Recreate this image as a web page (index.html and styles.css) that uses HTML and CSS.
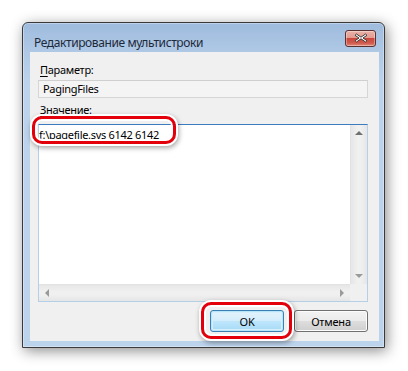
FILE: index.html
```html
<!DOCTYPE html>
<html lang="ru">
<head>
<meta charset="utf-8">
<link rel="stylesheet" href="styles.css">
</head>
<body>
<div class="window">
  <div class="titlebar">
    <span class="title">Редактирование мультистроки</span>
    <button class="close" aria-label="Закрыть">
      <svg width="14" height="10" viewBox="0 0 14 10">
        <path d="M2.5 1 L7 4.2 L11.5 1 L13 2.3 L9 5 L13 7.7 L11.5 9 L7 5.8 L2.5 9 L1 7.7 L5 5 L1 2.3 Z" fill="#fff" stroke="#3b3b3b" stroke-width="1" stroke-linejoin="round"/>
      </svg>
    </button>
  </div>
  <div class="client">
    <div class="label"><u>П</u>араметр:</div>
    <div class="field">PagingFiles</div>
    <div class="label label2"><u>З</u>начение:</div>
    <div class="multi">
      <div class="multi-main">
        <div class="text-area">
          <div class="value">f:\pagefile.sys 6142 6142</div>
        </div>
        <div class="vscroll">
          <span class="arr up"></span>
          <span class="arr down"></span>
        </div>
      </div>
      <div class="hrow">
        <div class="hscroll">
          <span class="arr left"></span>
          <span class="arr right"></span>
        </div>
        <div class="corner"></div>
      </div>
    </div>
    <div class="buttons">
      <button class="btn btn-ok">OK</button>
      <button class="btn btn-cancel">Отмена</button>
    </div>
  </div>
  <div class="mark mark-value"></div>
  <div class="mark mark-ok"></div>
</div>
</body>
</html>
```

FILE: styles.css
```css
html, body {
  margin: 0;
  padding: 0;
  background: #ffffff;
}
body {
  width: 408px;
  height: 371px;
  overflow: hidden;
  font-family: "Noto Sans", "Open Sans", sans-serif;
  font-size: 11px;
  letter-spacing: -0.3px;
  color: #000;
}
.window {
  position: relative;
  margin: 22px 0 0 22px;
  width: 363px;
  height: 326px;
  box-sizing: border-box;
  border: 1px solid #3a3a3a;
  border-radius: 6px 6px 0 0;
  background: linear-gradient(to bottom, #9fbbdd 0px, #afc9e6 30px, #bcd3ec 60px, #bcd3ec 100%);
  box-shadow: 0 0 0 1px rgba(255,255,255,0.35) inset, 2px 3px 14px rgba(0,0,0,0.45);
  padding: 0 5px 6px 7px;
  display: flex;
  flex-direction: column;
}
.titlebar {
  height: 29px;
  display: flex;
  align-items: center;
  justify-content: space-between;
}
.title {
  padding-left: 4px;
  font-size: 12px;
  letter-spacing: -0.4px;
  color: #1e2a3a;
  margin-top: 10px;
}
.close {
  width: 31px;
  height: 17px;
  margin-top: 1px;
  margin-right: 3px;
  padding: 0;
  border: 1px solid #5a3030;
  border-radius: 3px;
  background: linear-gradient(to bottom, #eab1a8 0%, #e39b90 45%, #c9473b 50%, #d05a4d 80%, #e08a7b 100%);
  box-shadow: inset 0 0 0 1px rgba(255,255,255,0.35);
  display: flex;
  align-items: center;
  justify-content: center;
}
.close svg {
  display: block;
}
.client {
  flex: 1;
  background: #f0f0f0;
  padding: 10px 11px 0 8px;
  display: flex;
  flex-direction: column;
}
.label {
  line-height: 15px;
  padding-left: 2px;
  color: #000;
}
.label u {
  text-decoration-thickness: 1px;
  text-underline-offset: 2px;
}
.field {
  margin-top: 3px;
  height: 18px;
  box-sizing: border-box;
  border: 1px solid #d6d6d6;
  border-top-color: #cfcfcf;
  background: #f4f4f4;
  padding-left: 4px;
  line-height: 16px;
}
.label2 {
  margin-top: 4px;
}
.multi {
  margin-top: 7px;
  height: 178px;
  box-sizing: border-box;
  border: 1px solid #5a9ee0;
  border-left-color: #b5cfe7;
  border-right-color: #b5cfe7;
  border-bottom-color: #b5cfe7;
  border-top-color: #3d7bbf;
  background: #fff;
  display: flex;
  flex-direction: column;
}
.multi-main {
  flex: 1;
  display: flex;
}
.text-area {
  flex: 1;
  padding: 2px 0 0 0;
}
.value {
  line-height: 15px;
  white-space: nowrap;
}
.vscroll {
  position: relative;
  width: 16px;
  background: linear-gradient(to right, #e6e6e6, #f0f0f0 40%, #f0f0f0 60%, #e6e6e6);
  border-left: 1px solid #e2e2e2;
  display: flex;
  flex-direction: column;
  justify-content: space-between;
  align-items: center;
  padding: 6px 0;
}
.hrow {
  height: 17px;
  display: flex;
}
.hscroll {
  flex: 1;
  background: linear-gradient(to bottom, #e6e6e6, #f0f0f0 40%, #f0f0f0 60%, #e6e6e6);
  border-top: 1px solid #e2e2e2;
  display: flex;
  justify-content: space-between;
  align-items: center;
  padding: 0 6px;
}
.corner {
  width: 17px;
  background: #f0f0f0;
}
.arr {
  width: 0;
  height: 0;
  border: 4px solid transparent;
}
.arr.up {
  border-bottom: 4px solid #707070;
  border-top-width: 0;
}
.arr.down {
  border-top: 4px solid #9a9a9a;
  border-bottom-width: 0;
}
.arr.left {
  border-right: 4px solid #9a9a9a;
  border-left-width: 0;
}
.arr.right {
  border-left: 4px solid #9a9a9a;
  border-right-width: 0;
}
.buttons {
  margin-top: 8px;
  display: flex;
  justify-content: flex-end;
  gap: 10px;
}
.btn {
  width: 74px;
  height: 22px;
  box-sizing: border-box;
  font-family: inherit;
  font-size: 11px;
  letter-spacing: -0.2px;
  color: #000;
  border-radius: 3px;
  padding: 0;
}
.btn-ok {
  border: 1px solid #3c7fb1;
  background: linear-gradient(to bottom, #e5f4fc 0%, #d4edfb 48%, #bde6fd 52%, #a7d9f5 100%);
  box-shadow: inset 0 0 0 1px #b6e6fb, inset 0 0 0 2px #d6f0fb;
}
.btn-cancel {
  border: 1px solid #707070;
  background: linear-gradient(to bottom, #f2f2f2 0%, #ebebeb 48%, #dddddd 52%, #cfcfcf 100%);
  box-shadow: inset 0 0 0 1px #fcfcfc;
}
.mark {
  position: absolute;
  border: 3px solid #e3000b;
  border-radius: 10px;
  box-shadow: 0 0 0 2px #ffffff, 0 0 0 2px #fff inset, 1px 2px 5px 2px rgba(0,0,0,0.35);
}
.mark-value {
  left: 9px;
  top: 93px;
  width: 138px;
  height: 22px;
}
.mark-ok {
  left: 178px;
  top: 279px;
  width: 85px;
  height: 31px;
}
```
